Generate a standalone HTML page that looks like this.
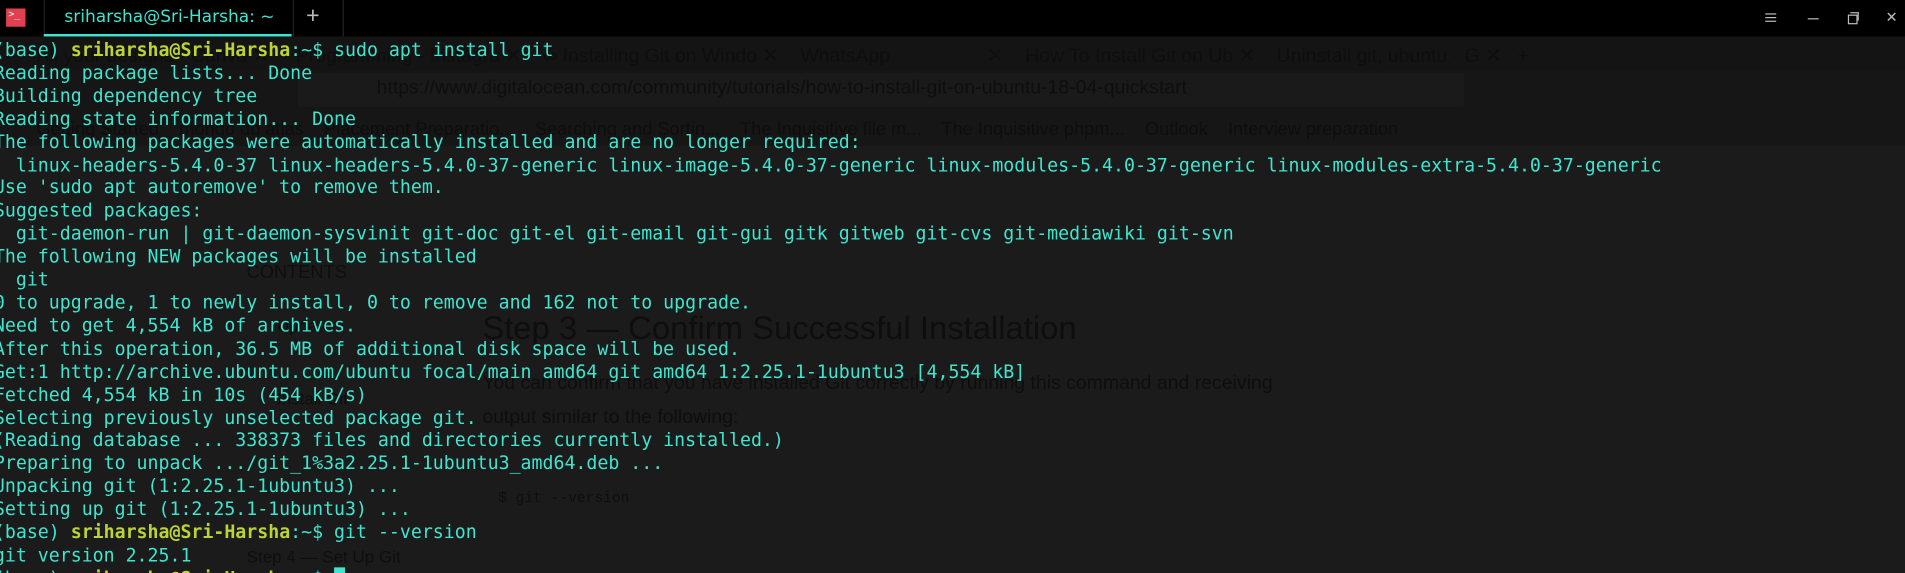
<!DOCTYPE html>
<html><head><meta charset="utf-8">
<style>
html,body{margin:0;padding:0;}
body{width:1905px;height:573px;overflow:hidden;background:#1b1b1b;position:relative;font-family:"Liberation Sans",sans-serif;}
#stage{position:absolute;left:0;top:0;width:1568px;height:472px;transform:scale(1.2149);transform-origin:0 0;overflow:hidden;}
.tb{position:absolute;left:0;top:0;width:1568px;height:30px;background:#000;}
.ghost{position:absolute;color:#0e0e0e;white-space:nowrap;font-family:"Liberation Sans",sans-serif;}
.term{position:absolute;left:-5px;top:32px;font-family:"DejaVu Sans Mono",monospace;font-size:15px;line-height:18.9px;color:#3ee6cf;white-space:pre;}
.u{color:#bcd332;font-weight:bold;}
</style></head><body>
<div id="stage">
<div style="position:absolute;left:0;top:30px;width:1568px;height:28px;background:#141414;"></div>
<div style="position:absolute;left:0;top:58px;width:1568px;height:34px;background:#161616;"></div>
<div style="position:absolute;left:245px;top:60px;width:960px;height:28px;background:#1a1a1a;"></div>
<div style="position:absolute;left:0;top:92px;width:1568px;height:28px;background:#161616;"></div>
<div class="ghost" style="left:30px;top:36px;font-size:16px;">All your designs - Canva ✕ &nbsp;&nbsp;&nbsp; Programming - Instagra ✕ &nbsp;&nbsp; ∞ Installing Git on Windo ✕ &nbsp;&nbsp; WhatsApp &nbsp;&nbsp;&nbsp;&nbsp;&nbsp;&nbsp;&nbsp;&nbsp;&nbsp;&nbsp;&nbsp;&nbsp;&nbsp;&nbsp;&nbsp;&nbsp; ✕ &nbsp;&nbsp; How To Install Git on Ub ✕ &nbsp;&nbsp; Uninstall git, ubuntu · G ✕ &nbsp; +</div>
<div class="ghost" style="left:310px;top:64px;font-size:16px;">https://www.digitalocean.com/community/tutorials/how-to-install-git-on-ubuntu-18-04-quickstart</div>
<div class="ghost" style="left:30px;top:98px;font-size:15px;">Getting Started &nbsp;&nbsp; mongo db atlas &nbsp;&nbsp; Placement Preparatio... &nbsp;&nbsp; Searching and Sortin... &nbsp;&nbsp; The Inquisitive file m... &nbsp;&nbsp; The Inquisitive phpm... &nbsp;&nbsp; Outlook &nbsp;&nbsp; Interview preparation</div>
<div class="ghost" style="left:203px;top:216px;font-size:15px;">CONTENTS</div>
<div class="ghost" style="left:228px;top:260px;font-size:14px;">Update</div>
<div class="ghost" style="left:228px;top:320px;font-size:14px;">Install Git</div>
<div class="ghost" style="left:203px;top:450px;font-size:14px;">Step 4 — Set Up Git</div>
<div class="ghost" style="left:397px;top:255px;font-size:27px;">Step 3 — Confirm Successful Installation</div>
<div class="ghost" style="left:397px;top:307px;font-size:16px;">You can confirm that you have installed Git correctly by running this command and receiving</div>
<div class="ghost" style="left:397px;top:335px;font-size:16px;">output similar to the following:</div>
<div class="ghost" style="left:410px;top:403px;font-size:12px;font-family:'Liberation Mono',monospace;">$ git --version</div>
<div class="tb">
 <div style="position:absolute;left:5px;top:7px;width:16px;height:15px;background:#e04050;color:#fff;font-size:8px;line-height:10px;font-family:'DejaVu Sans Mono',monospace;padding-left:2px;box-sizing:border-box;">&gt;_</div>
 <div style="position:absolute;left:36px;top:0;width:204px;height:30px;border-left:1px solid #222;border-right:1px solid #222;"></div>
 <div style="position:absolute;left:36px;top:28px;width:204px;height:2px;background:#3ee6cf;"></div>
 <div style="position:absolute;left:53px;top:6px;font-size:14px;color:#3ee6cf;font-family:'DejaVu Sans',sans-serif;">sriharsha@Sri-Harsha: ~</div>
 <div style="position:absolute;left:252px;top:3px;font-size:19px;color:#bbb;font-weight:100;">+</div>
 <div style="position:absolute;left:282px;top:0;width:1px;height:30px;background:#222;"></div>
 <div style="position:absolute;left:1453px;top:11px;width:9px;height:1px;background:#bbb;box-shadow:0 3px 0 #bbb,0 6px 0 #bbb;"></div>
 <div style="position:absolute;left:1488px;top:15px;width:9px;height:1px;background:#bbb;"></div>
 <div style="position:absolute;left:1521px;top:12px;width:6px;height:6px;border:1px solid #bbb;"></div>
 <div style="position:absolute;left:1523px;top:10px;width:6px;height:6px;border-top:1px solid #bbb;border-right:1px solid #bbb;"></div>
 <div style="position:absolute;left:1552px;top:7px;font-size:12px;color:#bbb;">✕</div>
</div>
<div class="term">(base) <span class="u">sriharsha@Sri-Harsha</span>:~$ sudo apt install git
Reading package lists... Done
Building dependency tree
Reading state information... Done
The following packages were automatically installed and are no longer required:
  linux-headers-5.4.0-37 linux-headers-5.4.0-37-generic linux-image-5.4.0-37-generic linux-modules-5.4.0-37-generic linux-modules-extra-5.4.0-37-generic
Use 'sudo apt autoremove' to remove them.
Suggested packages:
  git-daemon-run | git-daemon-sysvinit git-doc git-el git-email git-gui gitk gitweb git-cvs git-mediawiki git-svn
The following NEW packages will be installed
  git
0 to upgrade, 1 to newly install, 0 to remove and 162 not to upgrade.
Need to get 4,554 kB of archives.
After this operation, 36.5 MB of additional disk space will be used.
Get:1 http://archive.ubuntu.com/ubuntu focal/main amd64 git amd64 1:2.25.1-1ubuntu3 [4,554 kB]
Fetched 4,554 kB in 10s (454 kB/s)
Selecting previously unselected package git.
(Reading database ... 338373 files and directories currently installed.)
Preparing to unpack .../git_1%3a2.25.1-1ubuntu3_amd64.deb ...
Unpacking git (1:2.25.1-1ubuntu3) ...
Setting up git (1:2.25.1-1ubuntu3) ...
(base) <span class="u">sriharsha@Sri-Harsha</span>:~$ git --version
git version 2.25.1
(base) <span class="u">sriharsha@Sri-Harsha</span>:~$ <span style="background:#3ee6cf;">&nbsp;</span></div>
</div>
</body></html>
